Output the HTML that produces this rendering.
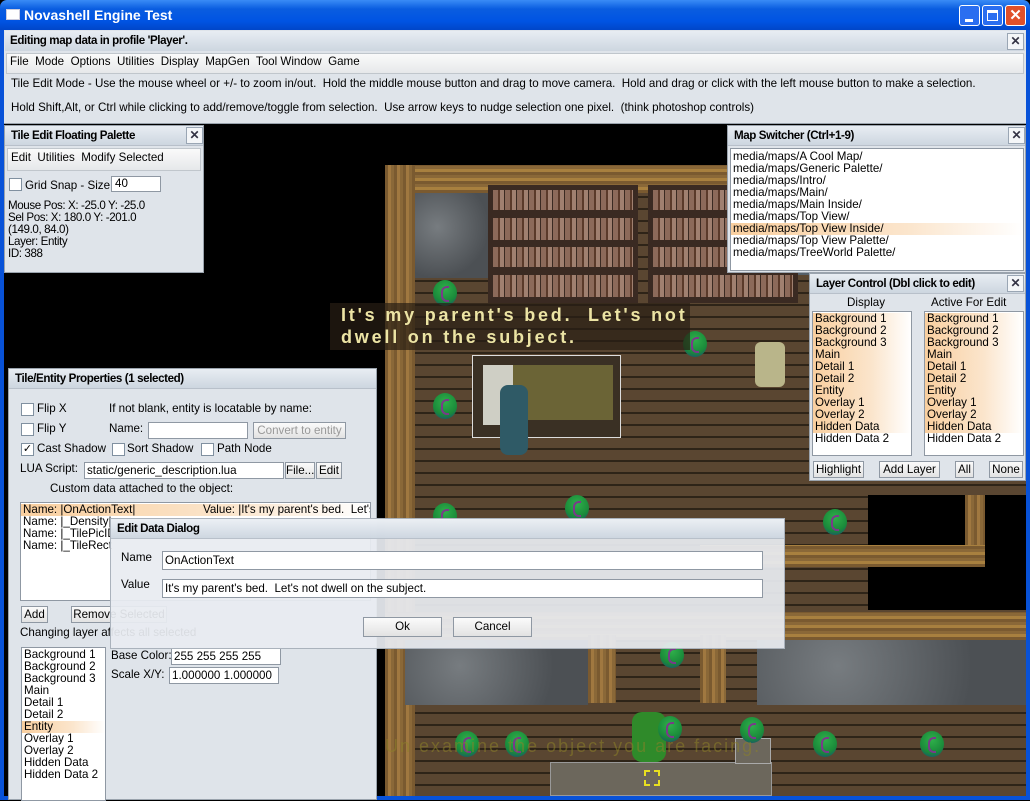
<!DOCTYPE html>
<html><head><meta charset="utf-8"><style>
*{box-sizing:border-box;margin:0;padding:0}
body{width:1030px;height:800px;overflow:hidden;position:relative;background:#000;font-family:"Liberation Sans",Tahoma,sans-serif;font-size:11.6px;color:#000}
.a{position:absolute}
.t{position:absolute;white-space:nowrap;line-height:14px}
.pn{position:absolute;background:#dfe4ea;border:1px solid #9aa3ad}
.hd{position:absolute;left:0;right:0;top:0;height:20px;background:linear-gradient(#e8edf3,#cdd6e0);font-weight:bold;padding:3px 6px;font-size:11.6px;letter-spacing:-0.4px;border-bottom:1px solid #b8c0ca;white-space:nowrap}
.x{position:absolute;width:17px;height:17px;background:#f4f6f8;border:1px solid #9aa6b4;font-size:12px;font-weight:bold;text-align:center;line-height:15px;color:#334}
.in{position:absolute;background:#fff;border:1px solid #8f98a3;white-space:nowrap;overflow:hidden}
.bt{position:absolute;background:linear-gradient(#fbfbfb,#e2e2e2);border:1px solid #8f98a3;text-align:center;line-height:15px;white-space:nowrap;overflow:hidden}
.cb{position:absolute;width:13px;height:13px;background:#fff;border:1px solid #8090a0}
.li div{height:12px;line-height:12px;padding-left:2px;white-space:nowrap}
.hl{background:linear-gradient(90deg,#f9cf9f,#fbe5cc 60%,#fff)}
.wood{background:repeating-linear-gradient(90deg,#7a5a30 0 3px,#a07840 3px 6px,#8a6838 6px 9px)}
.woodh{background:repeating-linear-gradient(0deg,#7a5a30 0 3px,#a8803f 3px 6px,#8a6838 6px 9px)}
.stone{background:radial-gradient(circle at 30% 40%,#777c80,#4c5054 70%)}
.shelf{background:repeating-linear-gradient(90deg,#8c6a5a 0 5px,#5a3a2a 5px 7px,#a08070 7px 11px,#3a2a22 11px 12px)}
.orb{position:absolute;width:24px;height:26px;border-radius:50%;background:radial-gradient(circle at 50% 35%,#2fb04a,#1a8a3a 60%,#1b3e80)}
.orb:after{content:"";position:absolute;left:8px;top:6px;width:6px;height:12px;border:2px solid #7a3a8a;border-right:none;border-radius:6px 0 0 6px}
</style></head><body>
<div class="a" style="left:0;top:0;width:1030px;height:30px;background:linear-gradient(#3a8cf6,#0a5de0 30%,#0054e3 70%,#0046c8);border-radius:7px 7px 0 0"></div>
<div class="a" style="left:6px;top:9px;width:14px;height:11px;background:#fff;border:1px solid #ccd"></div>
<div class="t" style="left:24px;top:8px;color:#fff;font-weight:bold;font-size:14px">Novashell Engine Test</div>
<div class="a" style="left:959px;top:5px;width:21px;height:21px;border:1px solid #fff;border-radius:3px;background:#2a6ef0"><div class="a" style="left:5px;top:13px;width:8px;height:3px;background:#fff"></div></div>
<div class="a" style="left:982px;top:5px;width:21px;height:21px;border:1px solid #fff;border-radius:3px;background:#2a6ef0"><div class="a" style="left:4px;top:4px;width:11px;height:11px;border:1px solid #fff;border-top-width:3px"></div></div>
<div class="a" style="left:1005px;top:5px;width:21px;height:21px;border:1px solid #fff;border-radius:3px;background:#e0502a;color:#fff;font-weight:bold;text-align:center;line-height:19px;font-size:15px">✕</div>
<div class="a" style="left:0;top:30px;width:4px;height:770px;background:#0852d8"></div>
<div class="a" style="left:1026px;top:30px;width:4px;height:770px;background:#0852d8"></div>
<div class="a" style="left:0;top:796px;width:1030px;height:4px;background:#0852d8"></div>
<div class="a" style="left:4px;top:30px;width:1022px;height:94px;background:#dfe4ea;border-bottom:1px solid #9aa3ad"></div>
<div class="a" style="left:5px;top:31px;width:1020px;height:20px;background:linear-gradient(#e8edf3,#cdd6e0)"></div>
<div class="t" style="left:10px;top:34px;font-weight:bold;letter-spacing:-0.4px">Editing map data in profile 'Player'.</div>
<div class="x" style="left:1007px;top:33px">✕</div>
<div class="a" style="left:6px;top:53px;width:1018px;height:21px;background:linear-gradient(#fafafa,#e6e8ea);border:1px solid #c0c6cc"></div>
<div class="t" style="left:10px;top:55px">File&nbsp; Mode&nbsp; Options&nbsp; Utilities&nbsp; Display&nbsp; MapGen&nbsp; Tool Window&nbsp; Game</div>
<div class="t" style="left:11px;top:77px">Tile Edit Mode - Use the mouse wheel or +/- to zoom in/out.&nbsp; Hold the middle mouse button and drag to move camera.&nbsp; Hold and drag or click with the left mouse button to make a selection.</div>
<div class="t" style="left:11px;top:101px">Hold Shift,Alt, or Ctrl while clicking to add/remove/toggle from selection.&nbsp; Use arrow keys to nudge selection one pixel.&nbsp; (think photoshop controls)</div>

<div class="a" style="left:385px;top:165px;width:641px;height:631px;background:repeating-linear-gradient(0deg,#5a4631 0 10px,#2e2418 10px 12px)"></div>
<div class="a woodh" style="left:385px;top:165px;width:641px;height:28px"></div>
<div class="a wood" style="left:385px;top:165px;width:30px;height:631px"></div>
<div class="a stone" style="left:415px;top:193px;width:75px;height:85px"></div>
<div class="a" style="left:488px;top:185px;width:150px;height:118px;background:#3a2a22"><div class="a shelf" style="left:5px;top:5px;width:140px;height:20px"></div><div class="a shelf" style="left:5px;top:33px;width:140px;height:22px"></div><div class="a shelf" style="left:5px;top:62px;width:140px;height:20px"></div><div class="a shelf" style="left:5px;top:90px;width:140px;height:22px"></div></div>
<div class="a" style="left:648px;top:185px;width:150px;height:118px;background:#3a2a22"><div class="a shelf" style="left:5px;top:5px;width:140px;height:20px"></div><div class="a shelf" style="left:5px;top:33px;width:140px;height:22px"></div><div class="a shelf" style="left:5px;top:62px;width:140px;height:20px"></div><div class="a shelf" style="left:5px;top:90px;width:140px;height:22px"></div></div>
<div class="a" style="left:798px;top:185px;width:30px;height:90px;background:#55606a"></div>
<div class="a" style="left:472px;top:355px;width:149px;height:83px;border:1px solid #ddd;background:#3a3024"></div>
<div class="a" style="left:483px;top:365px;width:30px;height:60px;background:#cfcfc5"></div>
<div class="a" style="left:513px;top:365px;width:100px;height:55px;background:#6b6436"></div>
<div class="a" style="left:500px;top:385px;width:28px;height:70px;background:#2f5a66;border-radius:8px"></div>
<div class="a" style="left:755px;top:342px;width:30px;height:45px;background:#b9b58a;border-radius:6px"></div>
<div class="a" style="left:868px;top:495px;width:158px;height:115px;background:#000"></div>
<div class="a wood" style="left:965px;top:495px;width:20px;height:70px"></div>
<div class="a woodh" style="left:700px;top:545px;width:285px;height:22px"></div>
<div class="a woodh" style="left:385px;top:612px;width:641px;height:28px"></div>
<div class="a stone" style="left:405px;top:640px;width:183px;height:65px"></div>
<div class="a stone" style="left:757px;top:640px;width:269px;height:65px"></div>
<div class="a wood" style="left:588px;top:635px;width:28px;height:68px"></div>
<div class="a wood" style="left:700px;top:635px;width:26px;height:68px"></div>
<div class="a" style="left:550px;top:762px;width:222px;height:34px;background:#6c675c;border:1px solid #999"></div>
<div class="a" style="left:735px;top:738px;width:36px;height:26px;background:#6c675c;border:1px solid #aaa"></div>
<div class="a" style="left:632px;top:712px;width:34px;height:50px;background:#2f8a2a;border-radius:10px"></div>
<div class="a" style="left:644px;top:770px;width:16px;height:16px;border:2px dashed #e8e020"></div>
<div class="orb" style="left:433px;top:280px"></div>
<div class="orb" style="left:683px;top:331px"></div>
<div class="orb" style="left:433px;top:393px"></div>
<div class="orb" style="left:823px;top:509px"></div>
<div class="orb" style="left:565px;top:495px"></div>
<div class="orb" style="left:433px;top:503px"></div>
<div class="orb" style="left:660px;top:642px"></div>
<div class="orb" style="left:505px;top:731px"></div>
<div class="orb" style="left:658px;top:716px"></div>
<div class="orb" style="left:740px;top:717px"></div>
<div class="orb" style="left:813px;top:731px"></div>
<div class="orb" style="left:920px;top:731px"></div>
<div class="orb" style="left:455px;top:731px"></div>
<div class="t" style="left:385px;top:736px;font-size:18px;line-height:20px;letter-spacing:2px;color:rgba(140,130,40,0.55)">Un examine the object you are facing.</div>
<div class="a" style="left:330px;top:303px;width:360px;height:47px;background:rgba(40,30,20,0.7)"></div>
<div class="t" style="left:341px;top:304px;font-size:18px;line-height:22px;font-weight:bold;letter-spacing:2.8px;color:#ece4a4">It's my parent's bed.&nbsp; Let's not<br>dwell on the subject.</div>

<div class="pn" style="left:4px;top:125px;width:200px;height:148px">
<div class="hd">Tile Edit Floating Palette</div>
<div class="x" style="left:181px;top:1px">✕</div>
<div class="a" style="left:2px;top:22px;width:194px;height:23px;background:linear-gradient(#fafafa,#e6e8ea);border:1px solid #c0c6cc"></div>
<div class="t" style="left:6px;top:25px">Edit&nbsp; Utilities&nbsp; Modify Selected</div>
<div class="cb" style="left:4px;top:52px"></div>
<div class="t" style="left:20px;top:53px">Grid Snap - Size</div>
<div class="in" style="left:106px;top:50px;width:50px;height:16px;padding-left:3px;line-height:14px">40</div>
<div class="t" style="left:3px;top:74px;line-height:12px;letter-spacing:-0.4px">Mouse Pos: X: -25.0 Y: -25.0<br>Sel Pos: X: 180.0 Y: -201.0<br>(149.0, 84.0)<br>Layer: Entity<br>ID: 388</div>
</div>

<div class="pn" style="left:727px;top:125px;width:299px;height:148px">
<div class="hd">Map Switcher (Ctrl+1-9)</div>
<div class="x" style="left:280px;top:1px">✕</div>
<div class="in li" style="left:2px;top:22px;width:294px;height:123px;padding-top:2px">
<div>media/maps/A Cool Map/</div><div>media/maps/Generic Palette/</div><div>media/maps/Intro/</div><div>media/maps/Main/</div><div>media/maps/Main Inside/</div><div>media/maps/Top View/</div><div class="hl">media/maps/Top View Inside/</div><div>media/maps/Top View Palette/</div><div>media/maps/TreeWorld Palette/</div>
</div></div>

<div class="pn" style="left:809px;top:273px;width:217px;height:208px">
<div class="hd">Layer Control (Dbl click to edit)</div>
<div class="x" style="left:197px;top:1px">✕</div>
<div class="t" style="left:37px;top:22px">Display</div>
<div class="t" style="left:121px;top:22px">Active For Edit</div>
<div class="in li" style="left:2px;top:37px;width:100px;height:145px;padding-top:1px">
<div class="hl">Background 1</div><div class="hl">Background 2</div><div class="hl">Background 3</div><div class="hl">Main</div><div class="hl">Detail 1</div><div class="hl">Detail 2</div><div class="hl">Entity</div><div class="hl">Overlay 1</div><div class="hl">Overlay 2</div><div class="hl">Hidden Data</div><div>Hidden Data 2</div></div>
<div class="in li" style="left:114px;top:37px;width:100px;height:145px;padding-top:1px">
<div class="hl">Background 1</div><div class="hl">Background 2</div><div class="hl">Background 3</div><div class="hl">Main</div><div class="hl">Detail 1</div><div class="hl">Detail 2</div><div class="hl">Entity</div><div class="hl">Overlay 1</div><div class="hl">Overlay 2</div><div class="hl">Hidden Data</div><div>Hidden Data 2</div></div>
<div class="bt" style="left:3px;top:187px;width:51px;height:17px">Highlight</div>
<div class="bt" style="left:69px;top:187px;width:61px;height:17px">Add Layer</div>
<div class="bt" style="left:145px;top:187px;width:19px;height:17px">All</div>
<div class="bt" style="left:179px;top:187px;width:34px;height:17px">None</div>
</div>

<div class="pn" style="left:8px;top:368px;width:369px;height:432px">
<div class="hd">Tile/Entity Properties (1 selected)</div>
<div class="cb" style="left:12px;top:34px"></div><div class="t" style="left:28px;top:33px">Flip X</div>
<div class="cb" style="left:12px;top:54px"></div><div class="t" style="left:28px;top:53px">Flip Y</div>
<div class="cb" style="left:12px;top:74px;font-size:11px;line-height:11px;text-align:center">✓</div><div class="t" style="left:28px;top:73px">Cast Shadow</div>
<div class="cb" style="left:103px;top:74px"></div><div class="t" style="left:118px;top:73px">Sort Shadow</div>
<div class="cb" style="left:192px;top:74px"></div><div class="t" style="left:208px;top:73px">Path Node</div>
<div class="t" style="left:100px;top:33px">If not blank, entity is locatable by name:</div>
<div class="t" style="left:100px;top:53px">Name:</div>
<div class="in" style="left:139px;top:53px;width:100px;height:17px"></div>
<div class="bt" style="left:244px;top:53px;width:93px;height:17px;color:#999">Convert to entity</div>
<div class="t" style="left:11px;top:93px">LUA Script:</div>
<div class="in" style="left:75px;top:93px;width:200px;height:17px;padding-left:2px;line-height:15px">static/generic_description.lua</div>
<div class="bt" style="left:276px;top:93px;width:30px;height:17px">File...</div>
<div class="bt" style="left:307px;top:93px;width:26px;height:17px">Edit</div>
<div class="t" style="left:41px;top:113px">Custom data attached to the object:</div>
<div class="in li" style="left:11px;top:133px;width:351px;height:99px;padding-top:1px">
<div class="hl">Name: |OnActionText|&nbsp;&nbsp;&nbsp;&nbsp;&nbsp;&nbsp;&nbsp;&nbsp;&nbsp;&nbsp;&nbsp;&nbsp;&nbsp;&nbsp;&nbsp;&nbsp;&nbsp;&nbsp;&nbsp;&nbsp; Value: |It's my parent's bed.&nbsp; Let's</div><div>Name: |_Density|</div><div>Name: |_TilePicID</div><div>Name: |_TileRect</div></div>
<div class="bt" style="left:12px;top:237px;width:27px;height:17px">Add</div>
<div class="bt" style="left:62px;top:237px;width:96px;height:17px">Remove Selected</div>
<div class="t" style="left:11px;top:257px">Changing layer affects all selected</div>
<div class="in li" style="left:12px;top:278px;width:85px;height:154px;padding-top:1px">
<div>Background 1</div><div>Background 2</div><div>Background 3</div><div>Main</div><div>Detail 1</div><div>Detail 2</div><div class="hl">Entity</div><div>Overlay 1</div><div>Overlay 2</div><div>Hidden Data</div><div>Hidden Data 2</div></div>
<div class="t" style="left:102px;top:280px">Base Color:</div>
<div class="in" style="left:162px;top:279px;width:110px;height:17px;padding-left:2px;line-height:15px">255 255 255 255</div>
<div class="t" style="left:102px;top:299px">Scale X/Y:</div>
<div class="in" style="left:160px;top:298px;width:110px;height:17px;padding-left:2px;line-height:15px">1.000000 1.000000</div>
</div>

<div class="a" style="left:110px;top:518px;width:675px;height:131px;background:rgba(232,236,241,0.93);border:1px solid #aab2bc">
<div class="hd" style="background:linear-gradient(rgba(236,240,245,0.95),rgba(205,214,224,0.95))">Edit Data Dialog</div>
<div class="t" style="left:10px;top:32px">Name</div>
<div class="in" style="left:51px;top:32px;width:601px;height:19px;padding-left:2px;line-height:17px">OnActionText</div>
<div class="t" style="left:10px;top:59px">Value</div>
<div class="in" style="left:51px;top:60px;width:601px;height:19px;padding-left:2px;line-height:17px">It's my parent's bed.&nbsp; Let's not dwell on the subject.</div>
<div class="bt" style="left:252px;top:98px;width:79px;height:20px;line-height:18px">Ok</div>
<div class="bt" style="left:342px;top:98px;width:79px;height:20px;line-height:18px">Cancel</div>
</div>
</body></html>
